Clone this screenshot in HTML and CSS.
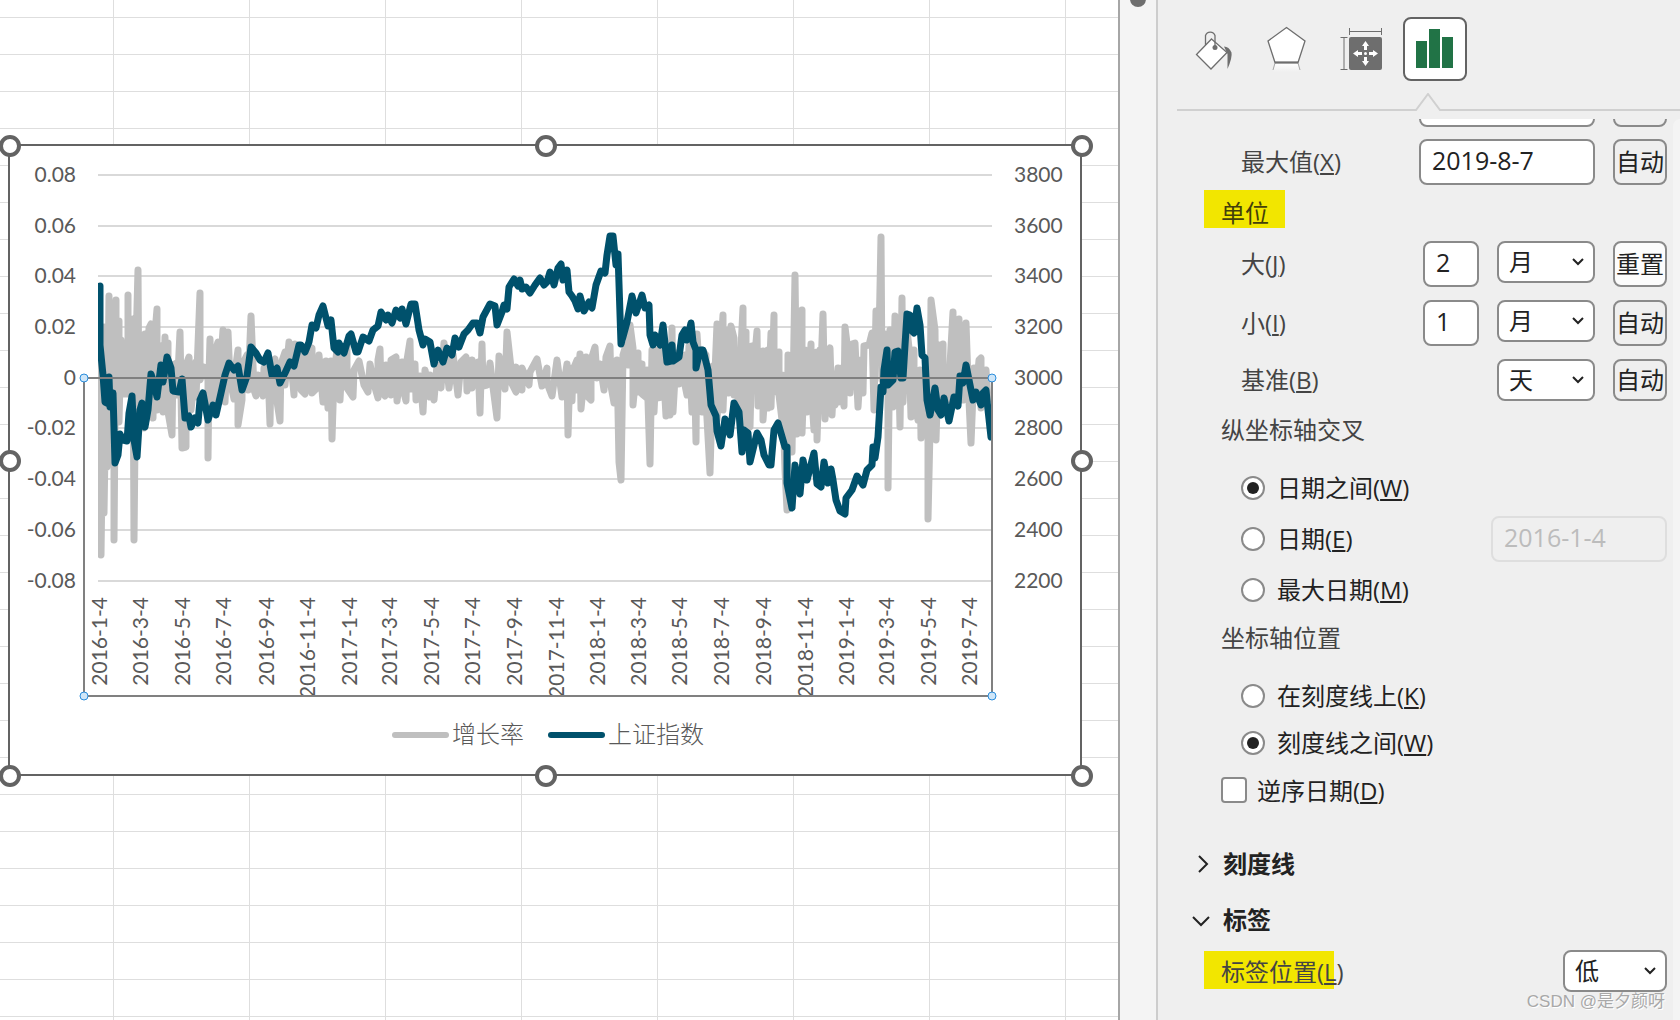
FILE: index.html
```html
<!DOCTYPE html>
<html lang="zh-CN">
<head>
<meta charset="utf-8">
<title>设置坐标轴格式</title>
<link rel="stylesheet" href="styles.css">
</head>
<body>
<div class="app">
  <main class="sheet">
    <svg class="chart" viewBox="0 130 1094 660" width="1094" height="660" role="img" aria-label="增长率与上证指数">
      <defs><clipPath id="plot"><rect x="98" y="170" width="895" height="415"/></clipPath></defs>
      <rect class="frame" x="9" y="145" width="1072" height="630"/>
      <path class="gridline" d="M98 175H992M98 226H992M98 276H992M98 327H992M98 428H992M98 479H992M98 530H992M98 581H992"/>
      <g clip-path="url(#plot)">
        <polyline class="series growth" points="99,370 99,385 101,360 101,555 104,327 104,513 107,327 107,467 109,296 109,460 112,370 114,340 114,540 116,300 116,400 119,321 119,422 121,340 121,394 128,394 128,295 128,394 133,319 134,540 136,345 138,270 139,425 143,354 144,428 145,334 146,420 149,328 151,324 151,400 153,418 154,345 157,309 157,410 161,346 163,412 165,337 166,400 168,343 168,412 172,435 173,365 177,363 177,395 180,332 182,448 186,447 186,365 189,357 191,410 196,362 196,397 200,293 200,380 204,367 208,380 208,458 209,375 210,339 211,400 213,410 214,355 218,342 218,402 223,330 225,402 228,332 230,380 234,399 235,372 238,350 238,425 242,400 242,365 247,355 248,390 251,316 254,390 256,396 258,375 263,396 264,368 268,370 270,424 271,365 275,359 276,395 280,421 281,364 285,352 285,385 289,342 294,395 295,344 301,348 301,390 305,394 308,355 312,348 312,393 316,389 319,355 323,402 326,361 328,408 331,361 332,439 334,375 337,350 340,400 342,360 347,345 347,388 353,397 354,370 359,361 364,385 368,392 370,364 374,384 378,398 378,360 380,349 381,390 385,396 386,365 391,395 391,360 396,357 397,401 402,362 402,385 406,401 407,360 410,341 411,389 415,364 416,400 420,376 423,412 425,370 430,397 430,375 434,400 437,365 441,388 444,343 449,388 453,354 458,395 461,362 466,357 467,391 472,360 472,388 478,362 480,413 482,344 483,386 487,385 490,363 493,387 497,418 499,356 505,389 507,332 511,368 512,384 516,392 516,367 522,390 522,368 529,385 530,372 537,359 542,386 547,368 547,383 552,396 557,360 562,397 567,364 568,435 570,368 572,401 573,370 577,360 577,390 580,354 581,409 586,357 586,395 591,400 591,360 595,347 597,378 600,364 604,390 606,357 610,346 611,386 614,403 617,360 619,462 621,480 623,355 626,345 628,365 630,325 633,348 633,405 638,353 638,392 642,364 642,394 647,398 647,370 650,464 652,350 654,412 657,350 657,398 662,397 662,345 666,416 670,350 670,415 672,328 673,412 676,360 679,352 679,384 685,355 685,385 687,395 689,346 692,412 694,350 696,442 697,334 702,412 702,350 706,355 706,400 710,473 713,366 713,420 717,324 717,420 723,315 723,410 726,330 729,393 731,326 734,338 734,395 738,370 738,408 743,308 743,420 746,332 746,425 750,427 752,346 752,388 757,331 758,406 763,351 763,420 768,350 768,408 771,333 771,407 774,315 774,392 779,352 779,395 782,420 782,375 785,470 787,510 788,355 792,452 795,275 797,434 799,350 802,310 802,433 805,350 805,390 807,412 811,344 811,385 814,430 817,352 817,440 820,350 820,395 823,314 825,419 829,350 830,348 832,415 834,375 835,405 838,368 838,402 842,368 842,395 844,406 845,327 849,360 850,393 852,344 855,343 858,407 861,360 863,393 864,346 869,345 872,333 874,410 876,311 879,340 881,237 882,380 885,334 888,380 888,488 890,330 893,407 895,316 898,340 900,427 902,298 903,402 906,320 909,348 911,417 914,350 914,400 918,420 920,370 921,438 924,370 924,430 928,430 928,519 930,430 931,300 935,330 936,440 939,345 939,400 943,344 943,392 948,375 948,400 953,312 953,400 959,319 960,400 963,400 966,323 968,380 971,443 974,368 976,395 979,360 981,358 981,408 986,370 988,400"/>
        <polyline class="series index" points="100,286 100,345 103,375 105,402 107,403 109,377 110,407 113,393 115,463 118,455 120,434 123,440 127,441 129,413 132,396 134,440 137,457 140,410 142,403 145,427 148,410 151,374 154,383 157,397 161,365 163,382 167,357 171,368 173,391 179,392 182,379 185,418 189,416 191,427 195,418 198,423 200,400 203,393 208,420 213,405 216,415 221,393 225,375 229,363 234,370 238,366 242,390 247,376 251,347 256,353 260,360 264,362 268,353 272,375 277,368 280,383 285,373 290,362 294,366 299,345 301,345 305,352 309,342 312,325 316,328 319,315 323,306 328,326 331,320 334,348 338,352 339,343 344,353 349,336 351,334 356,352 358,352 363,337 369,341 373,330 378,326 381,312 386,320 388,315 392,323 396,310 400,318 402,309 406,324 411,304 415,304 419,330 423,345 425,339 430,342 434,364 438,350 443,362 447,348 452,355 455,338 459,347 464,334 468,330 473,323 477,323 480,333 483,317 490,304 495,306 497,325 502,312 504,305 507,309 509,287 514,279 518,286 520,280 522,289 526,287 530,293 535,285 540,278 544,285 547,282 550,272 554,285 558,268 561,264 563,280 567,270 569,292 572,296 575,301 578,309 580,296 584,311 589,302 592,308 596,285 601,271 605,273 607,255 610,236 613,236 616,265 618,254 621,344 627,322 632,296 636,313 642,295 645,308 649,305 650,335 653,345 655,335 660,345 663,325 667,362 671,361 672,345 673,361 679,357 682,335 685,330 687,340 691,323 693,342 696,350 696,368 700,350 703,350 708,370 711,405 716,416 717,431 721,446 725,419 730,435 734,403 739,412 742,452 744,430 748,433 750,462 757,433 761,440 764,455 769,465 771,465 774,430 778,423 785,447 787,447 787,483 792,508 795,465 800,494 803,460 807,480 814,453 817,484 821,487 824,462 828,483 831,469 833,480 836,500 840,511 845,514 846,498 852,490 857,476 863,485 867,470 872,465 873,447 875,458 878,437 881,387 883,392 884,370 887,350 888,385 893,380 895,352 898,351 901,378 903,378 905,345 907,314 910,315 911,330 914,333 917,308 920,325 922,355 925,358 927,400 930,415 935,388 938,410 941,415 944,398 949,421 954,397 958,406 960,376 963,383 966,365 970,385 973,400 976,392 981,405 983,393 986,390 988,410 991,437"/>
      </g>
      <g class="tick end">
        <text x="76" y="182">0.08</text><text x="76" y="233">0.06</text><text x="76" y="283">0.04</text><text x="76" y="334">0.02</text><text x="76" y="385">0</text><text x="76" y="435">-0.02</text><text x="76" y="486">-0.04</text><text x="76" y="537">-0.06</text><text x="76" y="588">-0.08</text>
      </g>
      <g class="tick">
        <text x="1014" y="182">3800</text><text x="1014" y="233">3600</text><text x="1014" y="283">3400</text><text x="1014" y="334">3200</text><text x="1014" y="385">3000</text><text x="1014" y="435">2800</text><text x="1014" y="486">2600</text><text x="1014" y="537">2400</text><text x="1014" y="588">2200</text>
      </g>
      <g class="tick end">
        <text transform="translate(107 597) rotate(-90)">2016-1-4</text>
        <text transform="translate(148 597) rotate(-90)">2016-3-4</text>
        <text transform="translate(190 597) rotate(-90)">2016-5-4</text>
        <text transform="translate(231 597) rotate(-90)">2016-7-4</text>
        <text transform="translate(274 597) rotate(-90)">2016-9-4</text>
        <text transform="translate(315 597) rotate(-90)">2016-11-4</text>
        <text transform="translate(357 597) rotate(-90)">2017-1-4</text>
        <text transform="translate(397 597) rotate(-90)">2017-3-4</text>
        <text transform="translate(439 597) rotate(-90)">2017-5-4</text>
        <text transform="translate(480 597) rotate(-90)">2017-7-4</text>
        <text transform="translate(522 597) rotate(-90)">2017-9-4</text>
        <text transform="translate(564 597) rotate(-90)">2017-11-4</text>
        <text transform="translate(605 597) rotate(-90)">2018-1-4</text>
        <text transform="translate(646 597) rotate(-90)">2018-3-4</text>
        <text transform="translate(687 597) rotate(-90)">2018-5-4</text>
        <text transform="translate(729 597) rotate(-90)">2018-7-4</text>
        <text transform="translate(771 597) rotate(-90)">2018-9-4</text>
        <text transform="translate(813 597) rotate(-90)">2018-11-4</text>
        <text transform="translate(854 597) rotate(-90)">2019-1-4</text>
        <text transform="translate(894 597) rotate(-90)">2019-3-4</text>
        <text transform="translate(936 597) rotate(-90)">2019-5-4</text>
        <text transform="translate(977 597) rotate(-90)">2019-7-4</text>
      </g>
      <rect class="axis-box" x="84" y="378" width="908" height="318"/>
      <g class="axis-handles">
        <circle cx="84" cy="378" r="4"/><circle cx="992" cy="378" r="4"/><circle cx="84" cy="696" r="4"/><circle cx="992" cy="696" r="4"/>
      </g>
      <path class="series growth key" d="M395 735H446"/>
      <text class="legend" x="452" y="743">增长率</text>
      <path class="series index key" d="M551 735H602"/>
      <text class="legend" x="608" y="743">上证指数</text>
      <g class="handles">
        <circle cx="10" cy="146" r="9"/><circle cx="546" cy="146" r="9"/><circle cx="1082" cy="146" r="9"/>
        <circle cx="10" cy="461" r="9"/><circle cx="1082" cy="461" r="9"/>
        <circle cx="10" cy="776" r="9"/><circle cx="546" cy="776" r="9"/><circle cx="1082" cy="776" r="9"/>
      </g>
    </svg>
  </main>

  <div class="gutter"><span class="gutter-dot"></span></div>

  <aside class="panel">
    <nav class="tabs">
      <button class="tab" type="button" aria-label="填充与线条">
        <svg width="60" height="60" viewBox="0 0 60 60"><path d="M28.500 20L44 33.500 28 50 13.500 35.500Z" fill="#fff" stroke="#6e6e6e" stroke-width="1.300"/><path d="M22.500 26V16.500a5 5 0 0 1 9.500 0V28" fill="none" stroke="#6e6e6e" stroke-width="1.300"/><circle cx="32" cy="28.500" r="2.500" fill="#6e6e6e"/><path d="M41 27.500q5 0 7.500 6 1 5-4 16.500V35Z" fill="#6e6e6e"/></svg>
      </button>
      <button class="tab" type="button" aria-label="效果">
        <svg width="60" height="60" viewBox="0 0 60 60"><defs><linearGradient id="fade" x2="0" y2="1"><stop offset="0" stop-color="#fff"/><stop offset="1" stop-color="#efefef"/></linearGradient></defs><path d="M18 44H41L43 53H16Z" fill="url(#fade)"/><path d="M18 44L16 51M41 44L43 51" stroke="#a5a5a5" fill="none"/><path d="M29.500 8.500L48 22 41 43.500H18L11 22Z" fill="#fff" stroke="#6e6e6e" stroke-width="1.300"/><path d="M18 43.500H41" stroke="#6e6e6e" stroke-width="2"/></svg>
      </button>
      <button class="tab" type="button" aria-label="大小与属性">
        <svg width="60" height="60" viewBox="0 0 60 60"><path d="M18.500 9V16M50.500 9V16M18.500 12.500H50.500M9.500 18.500H16.500M9.500 50.500H16.500M13 18.500V50.500" stroke="#6e6e6e" fill="none"/><rect x="18" y="18" width="33" height="33" rx="2" fill="#6e6e6e"/><path d="M34.500 22l3.500 5h-2v4h-3v-4h-2ZM34.500 47l3.500-5h-2v-4h-3v4h-2ZM22 34.500l5-3.500v2h4v3h-4v2ZM47 34.500l-5-3.500v2h-4v3h4v2Z" fill="#fff"/><circle cx="34.500" cy="34.500" r="1.500" fill="#fff"/></svg>
      </button>
      <button class="tab active" type="button" aria-label="坐标轴选项" aria-pressed="true">
        <svg width="60" height="60" viewBox="0 0 60 60"><path d="M11 22h11v27H11ZM24 10h11v39H24ZM37 18h11v31H37Z" fill="#217346"/></svg>
      </button>
    </nav>
    <div class="divider"><svg class="notch" width="28" height="18" viewBox="0 0 28 18"><path d="M0 18L14 1 28 18Z" fill="#efefef"/><path d="M0 17H2L14 1 26 17H28" fill="none" stroke="#d0d0d0" stroke-width="2"/></svg></div>

    <div class="scroll">
      <form class="form">
        <div class="row clipped"><input class="field wide" type="text" aria-label="最小值"><button class="btn" type="button" aria-label="自动"></button></div>
        <div class="row"><label class="name" for="max">最大值(<u>X</u>)</label><input class="field wide" id="max" type="text" value="2019-8-7"><button class="btn" type="button">自动</button></div>
        <h3 class="group unit"><mark>单位</mark></h3>
        <div class="row"><label class="name" for="major">大(<u>J</u>)</label><input class="field short" id="major" type="text" value="2">
          <span class="select"><select aria-label="大单位"><option>月</option></select><svg width="14" height="8" viewBox="0 0 14 8"><path d="M2 1L7 6 12 1"/></svg></span><button class="btn reset" type="button">重置</button></div>
        <div class="row"><label class="name" for="minor">小(<u>I</u>)</label><input class="field short" id="minor" type="text" value="1">
          <span class="select"><select aria-label="小单位"><option>月</option></select><svg width="14" height="8" viewBox="0 0 14 8"><path d="M2 1L7 6 12 1"/></svg></span><button class="btn" type="button">自动</button></div>
        <div class="row base"><label class="name" for="base">基准(<u>B</u>)</label>
          <span class="select"><select id="base"><option>天</option></select><svg width="14" height="8" viewBox="0 0 14 8"><path d="M2 1L7 6 12 1"/></svg></span><button class="btn" type="button">自动</button></div>

        <h3 class="group cross">纵坐标轴交叉</h3>
        <div class="choices">
          <div class="choice"><label><input type="radio" name="cross" checked><span>日期之间(<u>W</u>)</span></label></div>
          <div class="choice"><label><input type="radio" name="cross"><span>日期(<u>E</u>)</span></label><input class="field wide" type="text" value="2016-1-4" aria-label="日期" disabled></div>
          <div class="choice"><label><input type="radio" name="cross"><span>最大日期(<u>M</u>)</span></label></div>
        </div>
        <h3 class="group place">坐标轴位置</h3>
        <div class="choices tight">
          <div class="choice"><label><input type="radio" name="place"><span>在刻度线上(<u>K</u>)</span></label></div>
          <div class="choice"><label><input type="radio" name="place" checked><span>刻度线之间(<u>W</u>)</span></label></div>
        </div>
        <div class="check"><label><input type="checkbox"><span>逆序日期(<u>D</u>)</span></label></div>

        <h2 class="section first"><svg width="20" height="20" viewBox="0 0 20 20"><path d="M7 2L15 10 7 18"/></svg>刻度线</h2>
        <h2 class="section"><svg width="20" height="20" viewBox="0 0 20 20"><path d="M1 7L9 15 17 7"/></svg>标签</h2>
        <div class="row label-row"><label class="name marked" for="pos">标签位置(<u>L</u>)</label>
          <span class="select pos"><select id="pos"><option>低</option></select><svg width="14" height="8" viewBox="0 0 14 8"><path d="M2 1L7 6 12 1"/></svg></span></div>
      </form>
      <div class="track"></div>
    </div>
    <p class="credit">CSDN @是夕颜呀</p>
  </aside>
</div>
</body>
</html>
```
FILE: styles.css
```css
* { box-sizing: border-box; }
body {
  margin: 0;
  font: 24px/34px "Open Sans", "Noto Sans CJK SC", sans-serif;
  color: #444;
  background: #fff;
}
.app { display: flex; min-height: 100vh; overflow: hidden; }

/* worksheet */
.sheet {
  flex: 1;
  position: relative;
  min-width: 0;
  overflow: hidden;
  border-right: 2px solid #a6a6a6;
  background:
    linear-gradient(90deg, #dedede 1px, transparent 1px) 113px 0 / 136px 37px,
    linear-gradient(#dedede 1px, transparent 1px) 0 17px / 136px 37px,
    #fff;
}
.chart { position: absolute; left: 0; top: 130px; }
.frame { fill: #fff; stroke: #636363; stroke-width: 2; }
.gridline { stroke: #d9d9d9; stroke-width: 2; }
.series { fill: none; stroke-width: 7; stroke-linecap: round; stroke-linejoin: round; }
.series.key { stroke-width: 6; }
.growth { stroke: #bfbfbf; }
.index { stroke: #00516c; }
.tick { font-family: Lato, sans-serif; font-size: 21px; fill: #595959; }
.tick.end { text-anchor: end; }
.legend { font-family: "Noto Sans CJK SC", sans-serif; font-size: 24px; font-weight: 300; fill: #595959; }
.axis-box { fill: none; stroke: #808080; stroke-width: 2; }
.axis-handles circle { fill: #cfe6f8; stroke: #2b8ddc; stroke-width: 1; }
.handles circle { fill: #fff; stroke: #636363; stroke-width: 4; }

.gutter { width: 36px; position: relative; background: #f4f4f4; }
.gutter-dot { position: absolute; left: 10px; top: -9px; width: 16px; height: 16px; border-radius: 50%; background: #6e6e6e; }

/* format panel */
.panel {
  position: relative;
  width: 524px;
  border-left: 2px solid #cdcdcd;
  background: #efefef;
}
.tabs { display: flex; gap: 10px; padding: 17px 0 28px 23px; }
.tab {
  width: 64px;
  height: 64px;
  padding: 0;
  border: 2px solid transparent;
  border-radius: 8px;
  background: none;
}
.tab svg { display: block; }
.tab.active { border-color: #636363; background: #fff; }
.divider { position: relative; height: 2px; margin: 0 0 8px 19px; background: #d0d0d0; }
.notch { position: absolute; left: 237px; bottom: 0; }

.scroll { display: flex; }
.track { width: 7px; border-radius: 7px 0 0 0; background: #f4f4f4; }
.form { flex: 1; padding: 0 6px 28px 34px; }
.row { display: flex; align-items: flex-start; gap: 18px; margin-bottom: 13px; padding-left: 49px; }
.name { flex: 1; padding-top: 6px; }
.clipped { height: 8px; margin-bottom: 12px; overflow: hidden; align-items: flex-end; justify-content: flex-end; }
.row + .unit { margin-top: -8px; }

.field, .btn, .select select {
  font: inherit;
  color: #222;
  border: 2px solid #8a8a8a;
  border-radius: 8px;
  background: #fff;
}
.field { height: 46px; padding: 0 11px 4px; font-size: 25px; }
.field.wide { width: 176px; }
.field.short { width: 56px; }
.field:disabled { color: #bcbcbc; border-color: #dedede; background: transparent; }
.btn { flex: none; width: 54px; height: 46px; padding: 0; background: transparent; white-space: nowrap; }
.btn.reset { background: #fcfcfc; }
.base .btn { height: 42px; }
.base .name { padding-top: 4px; }
.select { display: grid; width: 98px; height: 42px; align-items: center; }
.select select { grid-area: 1 / 1; width: 100%; height: 42px; padding: 0 10px; appearance: none; }
.select svg { grid-area: 1 / 1; justify-self: end; margin-right: 10px; pointer-events: none; }
.select path, .section path { fill: none; stroke: #222; stroke-width: 2; }
.select.pos { width: 104px; }

.group { margin: 0; padding-left: 29px; font-size: 24px; font-weight: 400; }
.unit { display: flex; padding-left: 12px; margin-bottom: 13px; }
.unit mark { height: 38px; padding: 4px 16px 0 17px; color: #443f0a; background: #f2e600; line-height: 38px; }
.cross { margin-top: -1px; }
.choices { margin-top: 15px; padding-left: 49px; color: #222; }
.choice { display: flex; align-items: center; justify-content: space-between; height: 51px; }
.choice label, .check label { display: flex; align-items: center; gap: 12px; }
.place { margin-top: 6px; }
.choices.tight { margin-top: 17px; }
.tight .choice { height: 47px; }
.check { display: flex; align-items: center; height: 48px; padding-left: 29px; color: #222; }
.check label { gap: 10px; }
.choice span, .check span { padding-top: 1px; }

input[type="radio"], input[type="checkbox"] {
  appearance: none;
  display: grid;
  place-items: center;
  width: 24px;
  height: 24px;
  margin: 0;
  border: 2px solid #8a8a8a;
  border-radius: 50%;
  background: #fff;
}
input[type="radio"]:checked::after { content: ""; width: 12px; height: 12px; border-radius: 50%; background: #222; }
input[type="checkbox"] { width: 26px; height: 26px; border-radius: 4px; }

.section { display: flex; align-items: center; gap: 11px; height: 36px; margin: 20px 0 12px; font-size: 24px; font-weight: 700; color: #222; }
.section.first { margin: 32px 0 20px; }
.label-row { padding-left: 29px; margin-bottom: 0; }
.marked { position: relative; z-index: 0; padding-top: 5px; }
.marked::before {
  content: "";
  position: absolute;
  z-index: -1;
  left: -17px;
  top: 1px;
  width: 130px;
  height: 38px;
  background: #f2e600;
}

.credit {
  position: absolute;
  right: 15px;
  bottom: 7px;
  margin: 0;
  font: 17px/22px "Liberation Sans", "Noto Sans CJK SC", sans-serif;
  color: #a8a8a8;
  text-shadow: 1px 1px 0 #fff;
}
```
